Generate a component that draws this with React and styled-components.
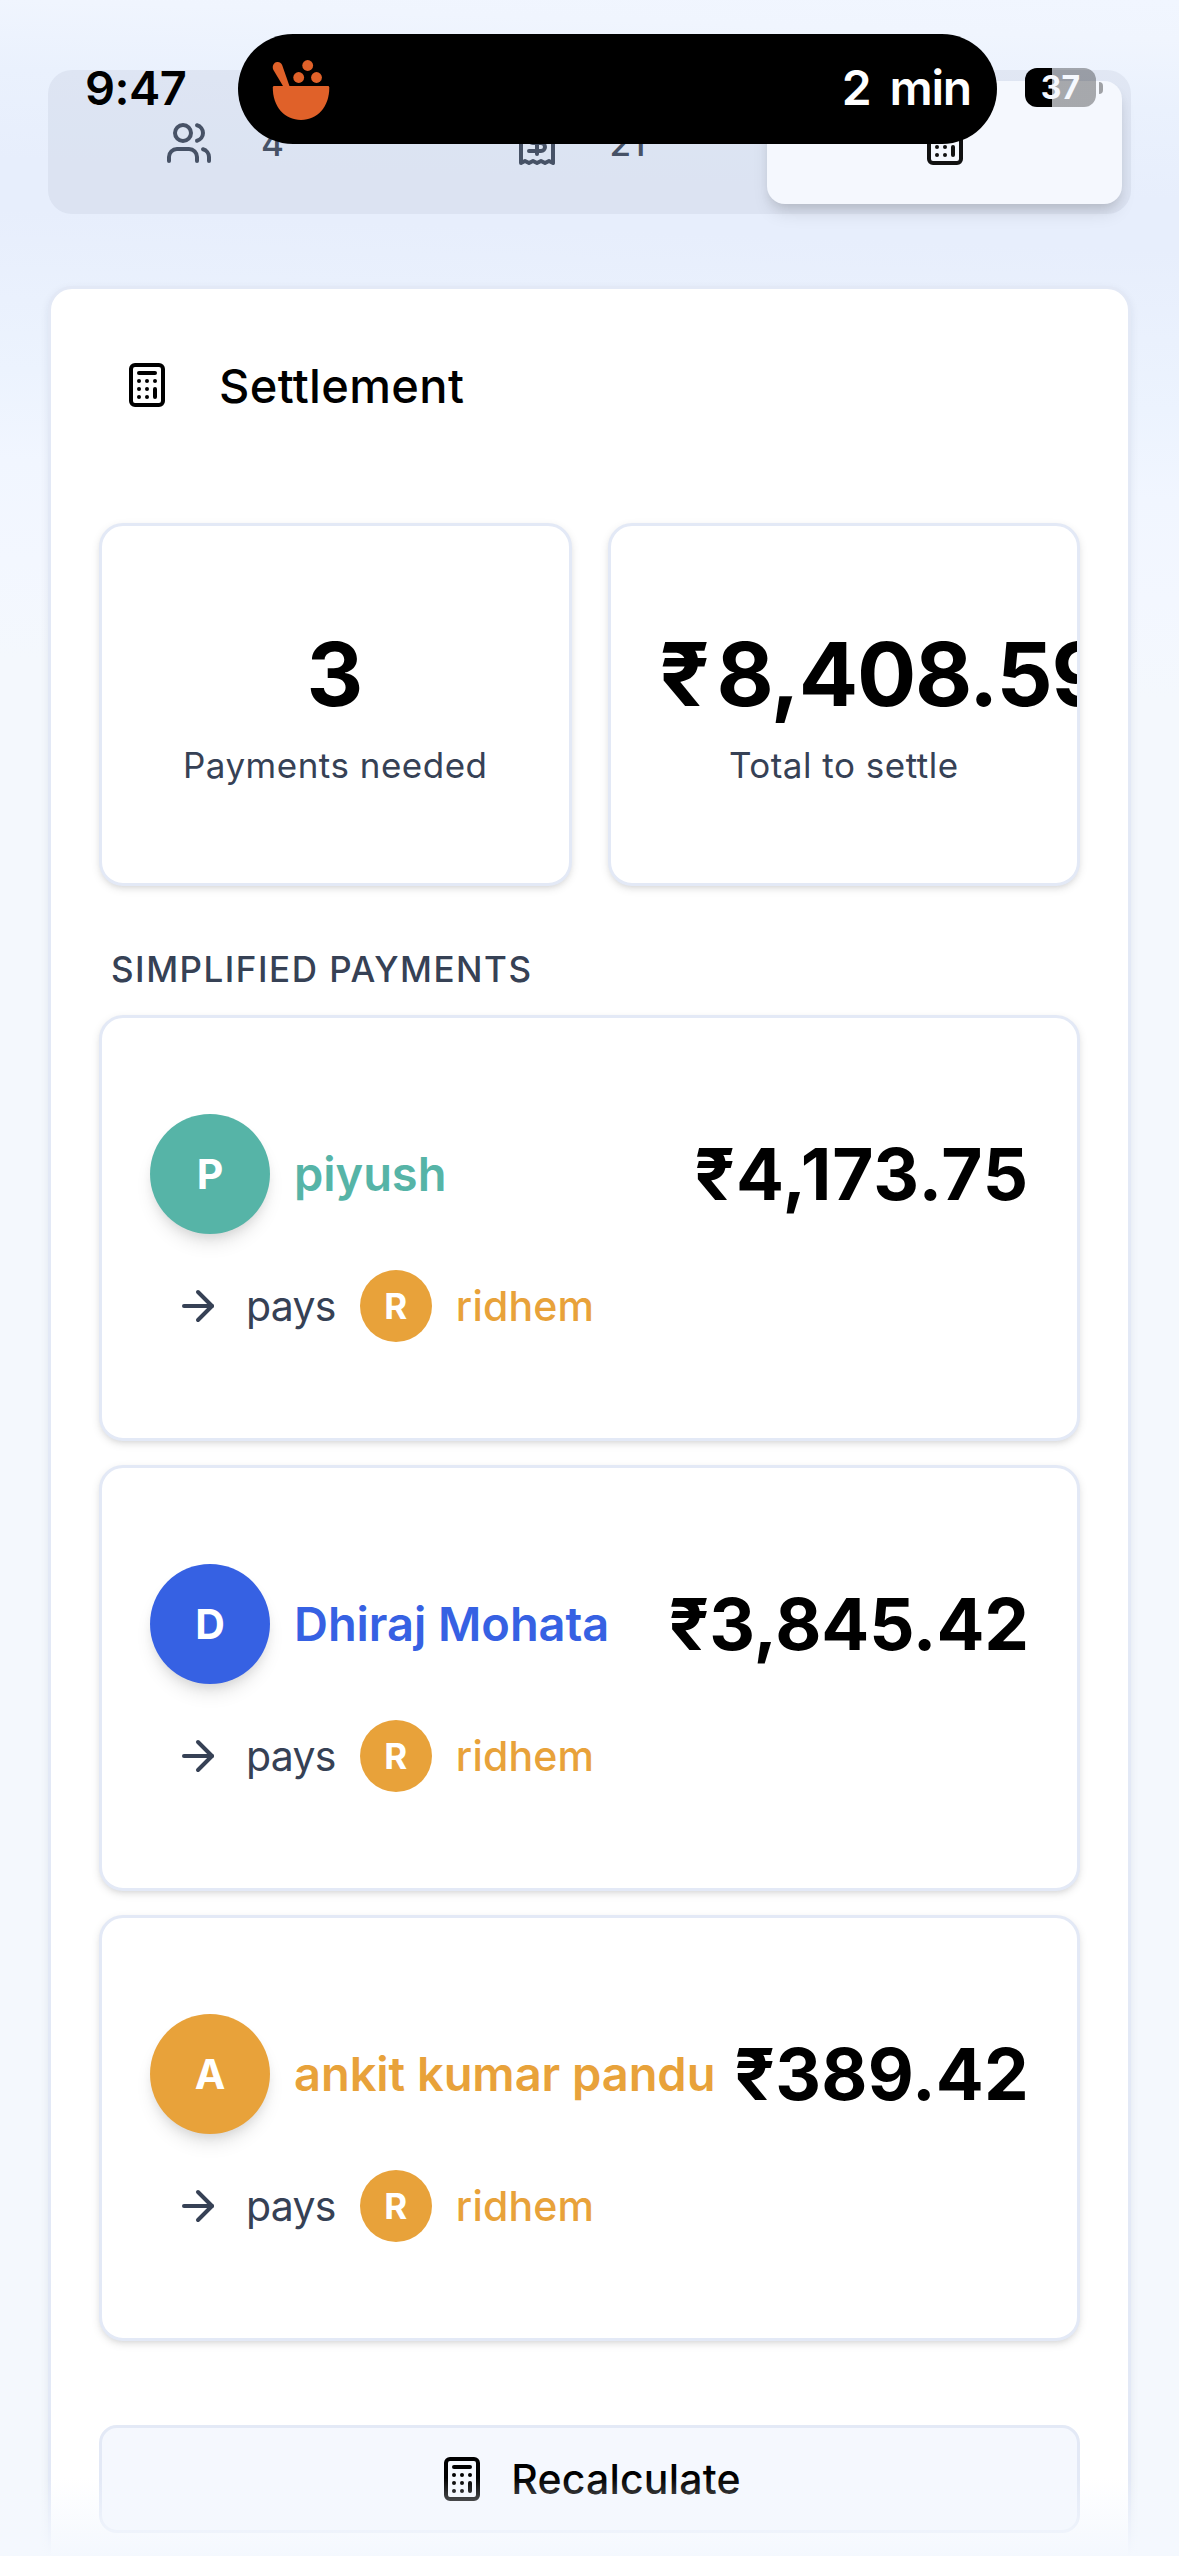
import React from 'react';
import styled, { createGlobalStyle } from 'styled-components';
import { ArrowRight, Calculator, Users } from 'lucide-react';

const GlobalStyle = createGlobalStyle`
* {
    box-sizing: border-box;
}
body {
    margin: 0;
    overflow: hidden;
    font-family: Inter, 'Liberation Sans', sans-serif;
    color: #000;
}
`;

const Page = styled.div`
position: relative;
width: 1179px;
height: 2556px;
overflow: hidden;
padding: 70px 48px 0;
background: linear-gradient(182deg, #f1f6ff 0, #f0f5fe 40px, #eaf1fd 110px, #e7eefc 200px, #e7eefc 250px, #eaf1fd 340px, #ecf3fe 410px, #f1f6ff 500px, #f3f7ff 600px, #f4f8fd 700px);
`;

const Tabs = styled.nav`
display: grid;
grid-template-columns: repeat(3, 1fr);
height: 144px;
padding: 11px 9px 10px;
border-radius: 24px;
background-color: rgba(140, 152, 170, 0.12);
`;

const Tab = styled.button`
display: flex;
align-items: center;
justify-content: center;
gap: 48px;
padding: 0 ${(props) => (props.$active ? 0 : 20)}px 0 0;
border: 0;
border-radius: 18px;
font: 500 35px Inter, sans-serif;
color: ${(props) => (props.$active ? '#111' : '#475266')};
background-color: ${(props) => (props.$active ? '#f5f8fe' : 'transparent')};
box-shadow: ${(props) => (props.$active ? '0 12px 18px -3px rgba(0,0,0,0.1), 0 6px 12px -4px rgba(0,0,0,0.12)' : 'none')};
`;

const Panel = styled.section`
margin-top: 72px;
height: 2400px;
padding: 0 48px;
border: 3px solid #e3e9f6;
border-radius: 24px;
background-color: #fff;
box-shadow: 0 3px 9px rgba(30, 41, 80, 0.08);
`;

const PanelHeader = styled.header`
display: flex;
align-items: center;
gap: 48px;
height: 192px;
padding: 0 24px;
`;

const Title = styled.h2`
margin: 0;
font-size: 47px;
font-weight: 500;
letter-spacing: 0.35px;
`;

const Stats = styled.div`
display: grid;
grid-template-columns: repeat(2, minmax(0, 1fr));
gap: 36px;
margin-top: 42px;
`;

const Card = styled.div`
overflow: hidden;
border: 3px solid #e3e9f6;
border-radius: 24px;
background-color: #fff;
box-shadow: 0 3px 9px rgba(0, 0, 0, 0.1), 0 3px 6px -3px rgba(0, 0, 0, 0.1);
`;

const StatCard = styled(Card)`
height: 363px;
padding: 94px 51px 0;
text-align: center;
`;

const StatValue = styled.div`
margin-left: -2px;
font-size: 88px;
line-height: 108px;
font-weight: 700;
letter-spacing: -1.3px;
white-space: nowrap;
`;

const Rupee = styled.span`
margin-right: 8px;
`;

const StatLabel = styled.div`
margin-top: 13px;
font-size: 35px;
line-height: 48px;
letter-spacing: 0.5px;
white-space: nowrap;
color: #364155;
`;

const SectionTitle = styled.h3`
margin: 59px 0 0 12px;
font-size: 35px;
line-height: 48px;
font-weight: 500;
letter-spacing: 1.5px;
color: #364155;
`;

const PaymentList = styled.div`
display: flex;
flex-direction: column;
gap: 24px;
margin-top: 22px;
`;

const PaymentCard = styled(Card)`
height: 426px;
padding: 96px 48px 0;
`;

const PayerRow = styled.div`
display: flex;
align-items: center;
height: 120px;
`;

const Avatar = styled.span`
display: flex;
flex: none;
align-items: center;
justify-content: center;
width: ${(props) => (props.$small ? 72 : 120)}px;
height: ${(props) => (props.$small ? 72 : 120)}px;
border-radius: 50%;
font-size: ${(props) => (props.$small ? 35 : 41)}px;
font-weight: 700;
letter-spacing: 0;
color: #fff;
background-color: ${(props) => props.$color};
box-shadow: ${(props) => (props.$small ? 'none' : '0 12px 18px -3px rgba(0,0,0,0.1), 0 6px 12px -4px rgba(0,0,0,0.1)')};
`;

const Name = styled.span`
margin-left: 24px;
padding-bottom: 2px;
font-size: 47px;
font-weight: 600;
white-space: nowrap;
letter-spacing: -0.05px;
color: ${(props) => props.$color};
`;

const Amount = styled.span`
margin-left: auto;
font-size: 71px;
font-weight: 700;
white-space: nowrap;
letter-spacing: ${(props) => props.$track}px;
`;

const PayeeRow = styled.div`
display: flex;
align-items: center;
gap: 24px;
height: 72px;
margin-top: 36px;
padding-left: 24px;
font-size: 41px;
letter-spacing: -0.7px;
color: #364155;
`;

const Payee = styled.span`
font-weight: 500;
letter-spacing: 0.2px;
color: #e8a23a;
`;

const RecalculateButton = styled.button`
display: flex;
align-items: center;
justify-content: center;
gap: 25px;
width: 100%;
height: 108px;
margin-top: 84px;
padding: 0;
border: 3px solid #e3e9f6;
border-radius: 18px;
font: 500 41px Inter, sans-serif;
letter-spacing: 0.2px;
color: #000;
background-color: #f5f8fe;
`;

const BottomFade = styled.div`
position: absolute;
left: 0;
right: 0;
bottom: 0;
height: 78px;
background: linear-gradient(rgba(244, 248, 254, 0), #f4f8fe);
`;

/* the system bar floats over the scrolled page */
const StatusBar = styled.div`
position: absolute;
top: 34px;
left: 0;
right: 0;
display: flex;
align-items: center;
height: 110px;
padding-left: 85px;
`;

const Clock = styled.span`
width: 153px;
padding-bottom: 3px;
font-size: 47px;
font-weight: 600;
letter-spacing: -0.5px;
`;

const Island = styled.div`
display: flex;
align-items: center;
justify-content: space-between;
width: 759px;
height: 110px;
padding: 0 26px 0 32px;
border-radius: 55px;
font-size: 48px;
font-weight: 600;
letter-spacing: -1.2px;
word-spacing: 8px;
color: #fff;
background-color: #000;
`;

const Eta = styled.span`
padding-bottom: 3px;
`;

const Battery = styled.div`
display: flex;
align-items: center;
justify-content: center;
width: 71px;
height: 39px;
margin: 0 0 3px 28px;
border-radius: 12px;
font-size: 32px;
font-weight: 700;
color: #f5f8fe;
background: linear-gradient(90deg, #000 27px, rgba(0, 0, 0, 0.32) 27px);
`;

const BatteryTip = styled.span`
width: 4px;
height: 12px;
margin: 0 0 2px 3px;
border-radius: 0 4px 4px 0;
background-color: rgba(0, 0, 0, 0.35);
`;

const Receipt = () => (
    <svg width="48" height="48" viewBox="0 0 24 24" fill="none" stroke="currentColor" strokeWidth="2" strokeLinecap="round" strokeLinejoin="round">
        <path d="M4 2v20l2-1 2 1 2-1 2 1 2-1 2 1 2-1 2 1V2l-2 1-2-1-2 1-2-1-2 1-2-1-2 1Z" />
        <path d="M16 8h-6a2 2 0 1 0 0 4h4a2 2 0 1 1 0 4H8" />
        <path d="M12 17.5v-11" />
    </svg>
);

const Bowl = () => (
    <svg width="60" height="64" viewBox="0 0 60 64" fill="#e06129">
        <circle cx="37.7" cy="8.5" r="5.4" />
        <circle cx="28.7" cy="20.5" r="5.4" />
        <circle cx="46.5" cy="20.5" r="5.4" />
        <path d="M3.3 12.8C1.8 9 3.6 5.2 7.2 4.9c2.6-.2 4.2 1.200 5.1 3.5L19.8 30h-6.2Z" />
        <path d="M4.3 29h53.5c1 0 1.5.5 1.5 1.6C59.3 50 47.5 63 31 63S2.8 50 2.8 30.6C2.8 29.5 3.3 29 4.3 29Z" />
    </svg>
);

const payments = [
    { name: 'piyush', initial: 'P', color: '#56b4a7', amount: '₹4,173.75', track: 0.9 },
    { name: 'Dhiraj Mohata', initial: 'D', color: '#3661e3', amount: '₹3,845.42', track: -0.1 },
    { name: 'ankit kumar pandu', initial: 'A', color: '#e8a23a', amount: '₹389.42', track: 0.2 },
];

function Payment({ payment }) {
    return (
        <PaymentCard>
            <PayerRow>
                <Avatar $color={payment.color}>{payment.initial}</Avatar>
                <Name $color={payment.color}>{payment.name}</Name>
                <Amount $track={payment.track}>{payment.amount}</Amount>
            </PayerRow>
            <PayeeRow>
                <ArrowRight size={48} />
                <span>pays</span>
                <Avatar $small $color="#e8a23a">R</Avatar>
                <Payee>ridhem</Payee>
            </PayeeRow>
        </PaymentCard>
    );
}

export default function App() {
    return (
        <>
            <GlobalStyle />
            <Page>
                <Tabs>
                    <Tab><Users size={48} />4</Tab>
                    <Tab><Receipt />21</Tab>
                    <Tab $active><Calculator size={48} /></Tab>
                </Tabs>
                <Panel>
                    <PanelHeader>
                        <Calculator size={48} />
                        <Title>Settlement</Title>
                    </PanelHeader>
                    <Stats>
                        <StatCard>
                            <StatValue>3</StatValue>
                            <StatLabel>Payments needed</StatLabel>
                        </StatCard>
                        <StatCard>
                            <StatValue><Rupee>₹</Rupee>8,408.59</StatValue>
                            <StatLabel>Total to settle</StatLabel>
                        </StatCard>
                    </Stats>
                    <SectionTitle>SIMPLIFIED PAYMENTS</SectionTitle>
                    <PaymentList>
                        {payments.map((payment) => (
                            <Payment key={payment.name} payment={payment} />
                        ))}
                    </PaymentList>
                    <RecalculateButton>
                        <Calculator size={48} />
                        Recalculate
                    </RecalculateButton>
                </Panel>
                <BottomFade />
                <StatusBar>
                    <Clock>9:47</Clock>
                    <Island>
                        <Bowl />
                        <Eta>2 min</Eta>
                    </Island>
                    <Battery>37</Battery>
                    <BatteryTip />
                </StatusBar>
            </Page>
        </>
    );
}
